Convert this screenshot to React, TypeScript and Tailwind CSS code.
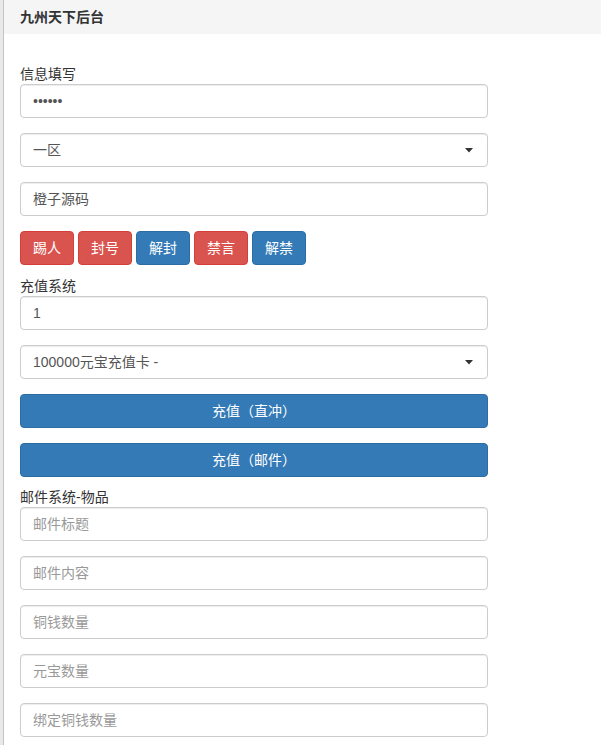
import React from "react";

const font = { fontFamily: '"Liberation Sans", "Noto Sans CJK SC", sans-serif' };

function Input({ value, placeholder, mb = "mb-[15px]" }: { value?: string; placeholder?: string; mb?: string }) {
  return (
    <div
      className={`h-[34px] w-[468px] rounded-[4px] border border-[#ccc] bg-white px-3 flex items-center text-[14px] shadow-[inset_0_1px_1px_rgba(0,0,0,0.075)] ${mb}`}
    >
      {value !== undefined ? (
        <span className="text-[#555]">{value}</span>
      ) : (
        <span className="text-[#999]">{placeholder}</span>
      )}
    </div>
  );
}

function Select({ value }: { value: string }) {
  return (
    <div className="h-[34px] w-[468px] rounded-[4px] border border-[#ccc] bg-white pl-3 pr-[14px] flex items-center justify-between text-[14px] shadow-[inset_0_1px_1px_rgba(0,0,0,0.075)] mb-[15px]">
      <span className="text-[#555]">{value}</span>
      <svg width="8" height="5" viewBox="0 0 8 5">
        <path d="M0 0 L8 0 L4 4.5 Z" fill="#333" />
      </svg>
    </div>
  );
}

function Btn({ label, color }: { label: string; color: "red" | "blue" }) {
  const c =
    color === "red"
      ? "bg-[#d9534f] border-[#d43f3a]"
      : "bg-[#337ab7] border-[#2e6da4]";
  return (
    <div className={`h-[34px] px-3 rounded-[4px] border text-white text-[14px] flex items-center justify-center ${c}`}>
      {label}
    </div>
  );
}

function Label({ text }: { text: string }) {
  return <div className="h-[20px] leading-[20px] text-[14px] text-[#333]">{text}</div>;
}

export default function App() {
  return (
    <div className="flex min-h-[745px] w-[601px] bg-white" style={font}>
      <div className="w-[3px] bg-[#e8e8e8]" />
      <div className="w-px bg-[#c4c4c4]" />
      <div className="flex-1 flex flex-col">
        <div className="h-[34px] bg-[#f5f5f5] flex items-center pl-4 text-[14px] font-bold text-[#333]">
          九州天下后台
        </div>
        <div className="pl-4 pt-[30px] flex flex-col">
          <Label text="信息填写" />
          <Input value="••••••" />
          <Select value="一区" />
          <Input value="橙子源码" />
          <div className="flex gap-1 mb-[11px]">
            <Btn label="踢人" color="red" />
            <Btn label="封号" color="red" />
            <Btn label="解封" color="blue" />
            <Btn label="禁言" color="red" />
            <Btn label="解禁" color="blue" />
          </div>
          <Label text="充值系统" />
          <Input value="1" />
          <Select value="100000元宝充值卡 -" />
          <div className="h-[34px] w-[468px] rounded-[4px] border border-[#2e6da4] bg-[#337ab7] text-white text-[14px] flex items-center justify-center mb-[15px]">
            充值（直冲）
          </div>
          <div className="h-[34px] w-[468px] rounded-[4px] border border-[#2e6da4] bg-[#337ab7] text-white text-[14px] flex items-center justify-center mb-[10px]">
            充值（邮件）
          </div>
          <Label text="邮件系统-物品" />
          <Input placeholder="邮件标题" />
          <Input placeholder="邮件内容" />
          <Input placeholder="铜钱数量" />
          <Input placeholder="元宝数量" />
          <Input placeholder="绑定铜钱数量" />
        </div>
      </div>
    </div>
  );
}
